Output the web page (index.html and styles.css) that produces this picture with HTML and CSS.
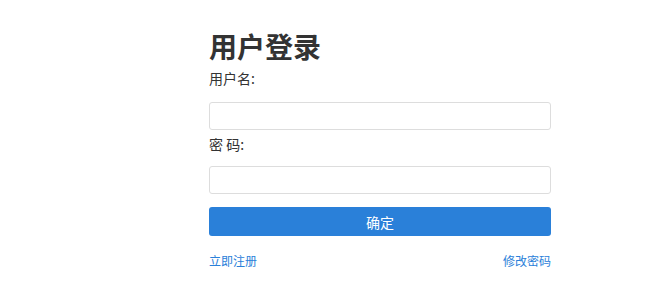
FILE: index.html
```html
<!DOCTYPE html>
<html lang="zh-CN">
<head>
    <meta charset="UTF-8">
    <meta name="viewport" content="width=device-width, initial-scale=1.0">
    <title>用户登录</title>
    <link rel="stylesheet" href="styles.css">
</head>
<body>

<div class="login">
    <h1 class="title">用户登录</h1>
    <form class="login-form">
        <label class="field-label" for="username">用户名:</label>
        <input class="field" type="text" id="username">

        <label class="field-label" for="password">密 码:</label>
        <input class="field field-pwd" type="password" id="password">

        <button class="submit-btn" type="button">确定</button>
    </form>
    <div class="links">
        <a href="#">立即注册</a>
        <a href="#">修改密码</a>
    </div>
</div>

</body>
</html>
```

FILE: styles.css
```css
body {
    margin: 0;
    background-color: #fff;
    color: #333;
    font-family: "Noto Sans CJK SC", "Liberation Sans", sans-serif;
}

.login {
    width: 342px;
    margin-left: 209px;
    padding-top: 28px;
}

.title {
    margin: 0;
    font-size: 28px;
    line-height: 36px;
    font-weight: bold;
}

.login-form {
    display: flex;
    flex-direction: column;
}

.field-label {
    margin-top: 4px;
    font-size: 14px;
    line-height: 20px;
}

.field {
    box-sizing: border-box;
    height: 28px;
    margin-top: 14px;
    border: 1px solid #ddd;
    border-radius: 3px;
    padding: 0 8px;
    outline: none;
}

.field-pwd {
    margin-top: 12px;
}

.submit-btn {
    height: 29px;
    margin-top: 13px;
    border: none;
    border-radius: 3px;
    background-color: #2a80d9;
    color: #fff;
    font-size: 14px;
    font-family: "Noto Sans CJK SC", sans-serif;
    cursor: pointer;
}

.links {
    display: flex;
    justify-content: space-between;
    margin-top: 16px;
    font-size: 12px;
    line-height: 18px;
}

.links a {
    color: #2a80d9;
    text-decoration: none;
}
```
